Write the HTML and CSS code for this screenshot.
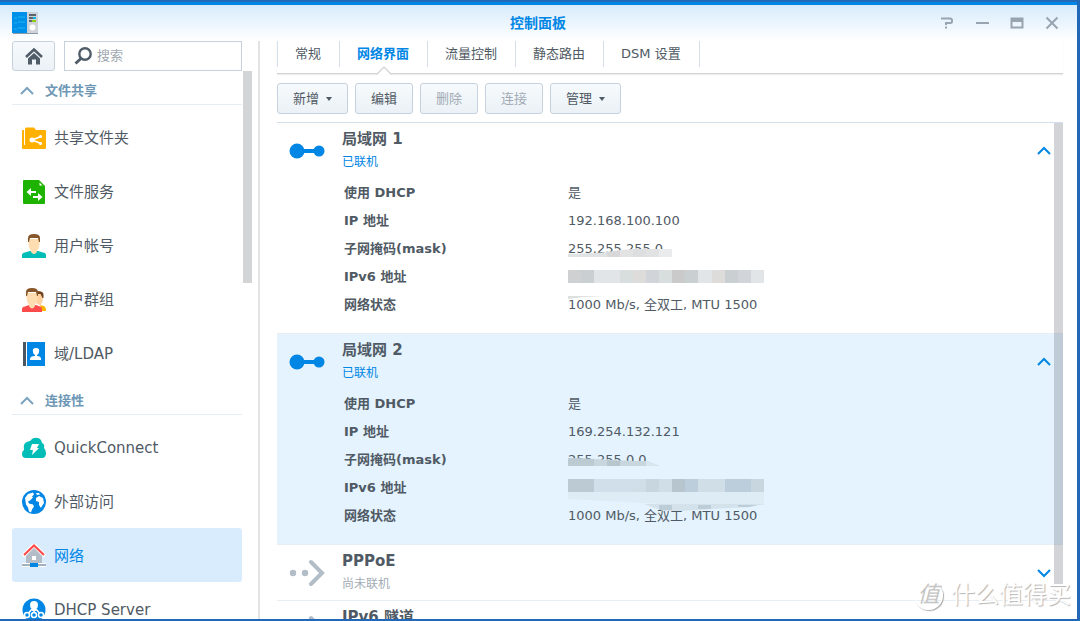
FILE: index.html
```html
<!DOCTYPE html>
<html lang="zh-CN">
<head>
<meta charset="utf-8">
<title>控制面板</title>
<link rel="stylesheet" href="styles.css">
</head>
<body>
<div class="window">
  <header class="titlebar">
    <svg class="app-icon" width="26" height="22" viewBox="0 0 26 22" aria-hidden="true">
      <path d="M14 0h12v21H14z" fill="#cdd3d8"/><path d="M0 0h15v21H0z" fill="#0090ea"/><path d="M1 21h25v1H1z" fill="#8b98a5"/>
      <path d="M2 6h3m1-1h7M2 11h3m1-1h7M2 17h3m1-1h7" stroke="#22b4ee" fill="none"/>
      <path d="M17 3h7M17 6h4M17 9h3" stroke="#37414b" stroke-width="1.600"/><path d="M21 6h3" stroke="#0bb8e8" stroke-width="2"/><path d="M20 9h4" stroke="#8fd014" stroke-width="2"/>
      <circle cx="20.500" cy="15.500" r="3" fill="#fff"/>
    </svg>
    <h1 class="title">控制面板</h1>
    <div class="controls">
      <button class="ctl" aria-label="帮助"><svg width="14" height="14" viewBox="0 0 14 14"><path d="M1 2.500h9q2 0 2 2v1q0 1.500-2 1.500H6v2" fill="none" stroke="#98a4b0" stroke-width="2"/><path d="M5 10.500h2v2H5z" fill="#98a4b0"/></svg></button>
      <button class="ctl" aria-label="最小化"><svg width="14" height="14" viewBox="0 0 14 14"><path d="M1 7h13" stroke="#98a4b0" stroke-width="2"/></svg></button>
      <button class="ctl" aria-label="最大化"><svg width="14" height="14" viewBox="0 0 14 14"><path d="M.5 1.500h13v11H.5zM2.500 6v4.500h9V6z" fill="#98a4b0" fill-rule="evenodd"/></svg></button>
      <button class="ctl" aria-label="关闭"><svg width="14" height="14" viewBox="0 0 14 14"><path d="M1.500 1.500l11 11m0-11l-11 11" stroke="#98a4b0" stroke-width="2"/></svg></button>
    </div>
  </header>
  <div class="body">
    <aside class="sidebar">
      <div class="side-head">
        <button class="btn home" aria-label="主页"><svg width="18" height="18" viewBox="0 0 18 18"><path d="M1 10L9 2.500 17 10" fill="none" stroke="#505d69" stroke-width="2.600"/><path d="M3 11.500l6-5.500 6 5.500v6h-4v-5H7v5H3z" fill="#505d69"/></svg></button>
        <label class="search"><svg width="18" height="18" viewBox="0 0 18 18" aria-hidden="true"><circle cx="11" cy="7" r="5.700" fill="none" stroke="#505d69" stroke-width="2.400"/><path d="M7 11.500L1.500 16.500" stroke="#505d69" stroke-width="3"/></svg><input type="text" placeholder="搜索" aria-label="搜索"></label>
      </div>
      <nav class="side-list">
        <section class="group">
          <button class="group-title"><svg width="14" height="10" viewBox="0 0 14 10"><path d="M1 8l6-6 6 6" fill="none" stroke="#7ba3bf" stroke-width="2"/></svg>文件共享</button>
          <a class="item" href="#"><svg width="24" height="24" viewBox="0 0 24 24"><path d="M0 5q0-1 1-1h1v15h1V3q0-1.500 1.500-1.500H12L14 4h9q1 0 1 1v17q0 1-1 1H1q-1 0-1-1z" fill="#ffb000"/><path d="M19 10.500L10 14l9 3.500" fill="none" stroke="#fff" stroke-width="1.500"/><circle cx="10" cy="14" r="2.500" fill="#fff"/><circle cx="18.500" cy="10.500" r="1.600" fill="#fff"/><circle cx="18.500" cy="17.500" r="1.600" fill="#fff"/></svg>共享文件夹</a>
          <a class="item" href="#"><svg width="24" height="24" viewBox="0 0 24 24"><path d="M2 0h15l6 6v17q0 1-1 1H2q-1 0-1-1V1q0-1 1-1z" fill="#1eb300"/><path d="M17.500 2.500v3h3z" fill="#fff"/><path d="M4.500 12l4.500-4v3h5v2H9v3z M20.500 17L16 13v3h-5v2h5v3z" fill="#fff"/></svg>文件服务</a>
          <a class="item" href="#"><svg width="24" height="24" viewBox="0 0 24 24"><path d="M0 24v-3q0-2 3-2.500L8 17h8l5 1.500q3 .5 3 2.500v3z" fill="#00bdb8"/><path d="M6.500 5h11v5q0 4-2.500 6.500v1.500q-3 4-6 0v-1.500Q6.500 14 6.500 10z" fill="#ffddb0"/><path d="M6 8V4q0-4 6-4t6 4v4h-1l-1-4H8L7 8z" fill="#87572b"/></svg>用户帐号</a>
          <a class="item" href="#"><svg width="24" height="24" viewBox="0 0 24 24"><path d="M18 17l4 1q2 1 2 4v1h-5z" fill="#ffb400"/><path d="M15 5h6v5q0 4-2 6v2l-5-3z" fill="#ffd0a0"/><path d="M15 3q7 0 6.500 4v3h-1l-2-4h-3z" fill="#70451f"/><path d="M0 24v-3q0-2 3-2.500L7 17h7l4 1.500q2 .5 2 2.500v3z" fill="#ff4b4b"/><path d="M4.500 5h11v5q0 4-2.500 6.500v1.500q-3 5-6 0v-1.500Q4.500 14 4.500 10z" fill="#ffddb0"/><path d="M4 8V4q0-4 6-4t6 4v4h-1l-1-4H6L5 8z" fill="#87572b"/></svg>用户群组</a>
          <a class="item" href="#"><svg width="24" height="24" viewBox="0 0 24 24"><path d="M1 0h3v24H1z" fill="#4a5763"/><path d="M5 0h18v24H5z" fill="#0086e5"/><path d="M11 10q-1-4 3-4t3 4q0 2-2 3v1q4 0 4 3v1H8v-1q0-3 5-3v-1q-2-1-2-3z" fill="#fff"/></svg>域/LDAP</a>
        </section>
        <section class="group">
          <button class="group-title"><svg width="14" height="10" viewBox="0 0 14 10"><path d="M1 8l6-6 6 6" fill="none" stroke="#7ba3bf" stroke-width="2"/></svg>连接性</button>
          <a class="item" href="#"><svg width="24" height="24" viewBox="0 0 24 24"><path d="M4 22q-4 0-4-4 0-3 2-4-2-8 6-9 3-4 7-3 4 0 5 5 3 1 2 5 2 2 2 5 0 5-4 5z" fill="#00bdb8"/><path d="M10 8h7l-2 4h2l-7 7 1-5H8z" fill="#fff"/></svg>QuickConnect</a>
          <a class="item" href="#"><svg width="24" height="24" viewBox="0 0 24 24"><circle cx="12" cy="12" r="12" fill="#0086e5"/><path d="M3 8l3-4 5-1.500 1 2-2 2 1 1-3 3-2 1 1 2 4 1 1 2-2 3-1 3-2-1-1-4-2-3z M14 8l3-2 4 2 1 5-2 3-1 2-2-3 0-3-3-1z M14 3l3 0 1 1.500-3 .5z" fill="#fff"/></svg>外部访问</a>
          <a class="item active" href="#" aria-current="page"><svg width="24" height="24" viewBox="0 0 24 24"><path d="M4 10l8-7 8 7v9H4z" fill="#b2bdc7"/><path d="M1 12L12 1l11 11" fill="none" stroke="#fff" stroke-width="4"/><path d="M2 11L12 1.500 22 11" fill="none" stroke="#ff4b4b" stroke-width="2.200"/><path d="M10 12h4v4h-4z" fill="#fff"/><path d="M0 19h24v4H0z" fill="#fff"/><path d="M0 20h24v2H0z" fill="#a4b0bb"/><path d="M8 19h8v4H8z" fill="#0086e5"/></svg>网络</a>
          <a class="item" href="#"><svg width="24" height="24" viewBox="0 0 24 24"><circle cx="12" cy="12" r="11.500" fill="#0086e5"/><path d="M10 11L5 17m9-6l5 6m-7-6v6" stroke="#fff" stroke-width="1.500"/><path d="M8 7q0-4 4-4t4 4q0 3-2 4v2h-4v-2q-2-1-2-4z" fill="#fff"/><g fill="#0086e5" stroke="#fff" stroke-width="1.500"><circle cx="5" cy="17" r="2.500"/><circle cx="12" cy="17" r="2.500"/><circle cx="19" cy="17" r="2.500"/></g></svg>DHCP Server</a>
        </section>
      </nav>
      <div class="side-scroll"></div>
    </aside>
    <main class="main">
      <div class="tabs" role="tablist">
        <button class="tab" role="tab">常规</button>
        <button class="tab current" role="tab" aria-selected="true">网络界面<svg class="notch" width="16" height="9" viewBox="0 0 16 9"><path d="M1 9l7-7 7 7z" fill="#fff"/><path d="M0 8h1l7-7 7 7h1" fill="none" stroke="#d6d8da" stroke-width="1.500"/></svg></button>
        <button class="tab" role="tab">流量控制</button>
        <button class="tab" role="tab">静态路由</button>
        <button class="tab" role="tab">DSM 设置</button>
      </div>
      <div class="toolbar">
        <button class="btn">新增<span class="caret"></span></button>
        <button class="btn">编辑</button>
        <button class="btn" disabled>删除</button>
        <button class="btn" disabled>连接</button>
        <button class="btn">管理<span class="caret"></span></button>
      </div>
      <div class="list">
        <section class="net">
          <div class="net-head">
            <svg class="net-icon" width="36" height="28" viewBox="0 0 36 28"><path d="M8 14h22" stroke="#0086e5" stroke-width="4"/><circle cx="8" cy="14" r="7.500" fill="#0086e5"/><circle cx="30" cy="14" r="5.500" fill="#0086e5"/></svg>
            <div class="net-names"><h2>局域网 1</h2><p class="on">已联机</p></div>
            <button class="toggle" aria-label="收起"><svg width="14" height="10" viewBox="0 0 14 10"><path d="M1 8l6-6 6 6" fill="none" stroke="#0086e5" stroke-width="2"/></svg></button>
          </div>
          <table class="details">
            <tr><th scope="row">使用 DHCP</th><td>是</td></tr>
            <tr><th scope="row">IP 地址</th><td>192.168.100.100</td></tr>
            <tr><th scope="row">子网掩码(mask)</th><td>255.255.255.0<svg class="smudge" width="196" height="28" viewBox="0 0 196 28"><path d="M0 19L26 18 39 17V22H0z" fill="#e0e3e3"/><path d="M39 17l13-2v7H39z" fill="#d8d8da"/><path d="M52 15l13-1v8H52z" fill="#e3e3e3"/><path d="M65 14h13v8H65z" fill="#dddedf"/><path d="M78 14h13v8H78z" fill="#e1e2e3"/><path d="M91 14h13v8H91z" fill="#e9ebed"/></svg></td></tr>
            <tr><th scope="row">IPv6 地址</th><td><svg class="smudge" width="196" height="28" viewBox="0 0 196 28"><path d="M0 7h196v13H0z" fill="#e2e5e7"/><path d="M0 7h13v13H0z" fill="#cfd0d2"/><path d="M13 7h13v13H13zM117 7h13v13h-13zM157 7h13v13h-13z" fill="#cacfd1"/><path d="M104 7h13v13h-13z" fill="#cacaca"/><path d="M52 7h13v13H52zM91 7h13v13H91z" fill="#d8dddd"/><path d="M78 7h13v13H78zM170 7h13v13h-13z" fill="#d1d5d9"/><path d="M65 7h13v13H65zM144 7h13v13h-13z" fill="#dddcda"/></svg></td></tr>
            <tr><th scope="row">网络状态</th><td>1000 Mb/s, 全双工, MTU 1500<svg class="smudge" width="196" height="28" viewBox="0 0 196 28"><path d="M0 5h38l-22 1L0 8z" fill="#dce1df"/></svg></td></tr>
          </table>
        </section>
        <section class="net selected">
          <div class="net-head">
            <svg class="net-icon" width="36" height="28" viewBox="0 0 36 28"><path d="M8 14h22" stroke="#0086e5" stroke-width="4"/><circle cx="8" cy="14" r="7.500" fill="#0086e5"/><circle cx="30" cy="14" r="5.500" fill="#0086e5"/></svg>
            <div class="net-names"><h2>局域网 2</h2><p class="on">已联机</p></div>
            <button class="toggle" aria-label="收起"><svg width="14" height="10" viewBox="0 0 14 10"><path d="M1 8l6-6 6 6" fill="none" stroke="#0086e5" stroke-width="2"/></svg></button>
          </div>
          <table class="details">
            <tr><th scope="row">使用 DHCP</th><td>是</td></tr>
            <tr><th scope="row">IP 地址</th><td>169.254.132.121</td></tr>
            <tr><th scope="row">子网掩码(mask)</th><td>255.255.0.0<svg class="smudge" width="196" height="28" viewBox="0 0 196 28"><path d="M0 12l26 1 39 2h14l13 5H0z" fill="#c8d6dd"/><path d="M0 12l26 1v7H0z" fill="#bccbd2"/><path d="M39 14l13 1v5H39z" fill="#b8c6ce"/><path d="M78 15l14 5H78z" fill="#d8e6ee"/></svg></td></tr>
            <tr><th scope="row">IPv6 地址</th><td><svg class="smudge" width="196" height="28" viewBox="0 0 196 28"><path d="M0 18h196v13H112L0 25z" fill="#deecf5"/><path d="M0 5h196v13H0z" fill="#cfdee7"/><path d="M0 5h26v13H0z" fill="#bccbd3"/><path d="M26 5h39v13H26z" fill="#d0dfe9"/><path d="M78 5h13v13H78zM183 5h13v13h-13z" fill="#c8d7df"/><path d="M104 5h13v13h-13z" fill="#b6c5ce"/><path d="M117 5h13v13h-13zM157 5h26v13h-26z" fill="#bccedb"/></svg></td></tr>
            <tr><th scope="row">网络状态</th><td>1000 Mb/s, 全双工, MTU 1500<svg class="smudge" width="196" height="28" viewBox="0 0 196 28"><path d="M76 2h120l-15 3-38 2-30 2H95z" fill="#d3e2eb"/><path d="M91 3h13v5H91zM130 3h13v4h-13zM170 3h20l-10 2h-10z" fill="#bdcdd7"/></svg></td></tr>
          </table>
        </section>
        <section class="net">
          <div class="net-head">
            <svg class="net-icon" width="36" height="28" viewBox="0 0 36 28"><circle cx="4" cy="14" r="3.200" fill="#b2bdc7"/><circle cx="16" cy="14" r="3.200" fill="#b2bdc7"/><path d="M22 3l11 11-11 11" fill="none" stroke="#b2bdc7" stroke-width="4" stroke-linecap="round"/></svg>
            <div class="net-names"><h2>PPPoE</h2><p>尚未联机</p></div>
            <button class="toggle" aria-label="展开"><svg width="14" height="10" viewBox="0 0 14 10"><path d="M1 2l6 6 6-6" fill="none" stroke="#0086e5" stroke-width="2"/></svg></button>
          </div>
        </section>
        <section class="net">
          <div class="net-head">
            <svg class="net-icon" width="36" height="28" viewBox="0 0 36 28"><circle cx="4" cy="14" r="3.200" fill="#b2bdc7"/><circle cx="16" cy="14" r="3.200" fill="#b2bdc7"/><path d="M22 3l11 11-11 11" fill="none" stroke="#b2bdc7" stroke-width="4" stroke-linecap="round"/></svg>
            <div class="net-names"><h2>IPv6 隧道</h2></div>
          </div>
        </section>
        <div class="list-scroll"></div>
      </div>
    </main>
  </div>
  <div class="watermark"><span class="wm-logo">值</span><span>什么值得买</span></div>
</div>
</body>
</html>
```
FILE: styles.css
```css
* { box-sizing: border-box; }
body {
  margin: 0;
  font: 13px/20px "DejaVu Sans", "Noto Sans CJK SC", sans-serif;
  color: #505a64;
}
h1, h2, p { margin: 0; }
button {
  font: inherit;
  color: inherit;
  background: none;
  border: 0;
  padding: 0;
}
svg { display: block; flex: none; }

.window {
  position: relative;
  display: flex;
  flex-direction: column;
  height: 100vh;
  overflow: hidden;
  background: #fff;
  border: solid #2268b8;
  border-width: 2px 3px 2px 0;
}
.titlebar {
  display: flex;
  align-items: center;
  justify-content: space-between;
  height: 39px;
  flex: none;
  padding: 0 18px 0 12px;
  border-top: 3px solid #0086e5;
  background: linear-gradient(#d7ebfb, #fff);
}
.app-icon, .controls { flex: none; }
.title {
  flex: 1;
  padding-left: 98px;
  font-size: 14px;
  text-align: center;
  color: #0086e5;
}
.controls { display: flex; gap: 21px; }

.body { display: flex; flex: 1; min-height: 0; }
.sidebar {
  position: relative;
  display: flex;
  flex-direction: column;
  flex: none;
  width: 260px;
  padding: 0 16px 0 12px;
  border-right: 2px solid #e2e3e5;
  overflow: hidden;
}
.side-head { display: flex; gap: 9px; flex: none; }
.btn {
  display: flex;
  align-items: center;
  justify-content: center;
  height: 31px;
  padding: 0 15px;
  border: 1px solid #c5d1dc;
  border-radius: 3px;
  background: linear-gradient(#f6fafd, #ebf1f6);
}
.btn:disabled { color: #a2abb5; }
.home { flex: none; width: 43px; height: 30px; padding: 0; }
.search {
  display: flex;
  align-items: center;
  gap: 5px;
  flex: 1;
  min-width: 0;
  height: 30px;
  padding: 0 9px;
  border: 1px solid #c5d1dc;
}
.search input {
  flex: 1;
  min-width: 0;
  padding: 0;
  border: 0;
  outline: 0;
  background: none;
  font: inherit;
  color: #505a64;
}
.search input::placeholder { color: #a0a8b0; opacity: 1; }
.side-scroll {
  position: absolute;
  top: 30px;
  right: 6px;
  width: 9px;
  height: 212px;
  background: #d3d4d6;
}
.group + .group { margin-top: 1px; }
.group-title {
  display: flex;
  align-items: center;
  gap: 11px;
  width: 100%;
  height: 34px;
  margin-bottom: 5px;
  padding: 7px 8px 0;
  border-bottom: 1px solid #e5edf4;
  font-weight: bold;
  color: #6d97b5;
}
.item {
  display: flex;
  align-items: center;
  gap: 8px;
  height: 54px;
  padding: 1px 10px 0;
  border-radius: 3px;
  font-size: 15px;
  color: #505a64;
  text-decoration: none;
}
.item.active { background: #d8ecfe; color: #0086e5; }

.main {
  display: flex;
  flex-direction: column;
  flex: 1;
  min-width: 0;
  padding: 0 14px 0 17px;
}
.tabs {
  display: flex;
  flex: none;
  height: 33px;
  border-bottom: 1px solid #d2d4d6;
  box-shadow: 0 1px 1px #eceded;
}
.tab {
  position: relative;
  height: 26px;
  padding: 0 18px 0 17px;
  border-left: 1px solid #d3dfea;
}
.tab:last-child { border-right: 1px solid #d3dfea; }
.tab.current { font-weight: bold; color: #0086e5; }
.notch { position: absolute; left: 50%; bottom: -8px; margin-left: -8px; }
.toolbar {
  display: flex;
  gap: 7px;
  flex: none;
  padding: 9px 0 8px;
}
.caret {
  margin-left: 7px;
  border: solid transparent;
  border-width: 4px 3px 0;
  border-top-color: #505a64;
}
.list {
  position: relative;
  flex: 1;
  min-height: 0;
  overflow: hidden;
  border-top: 1px solid #d3e0ec;
}
.net { border-bottom: 1px solid #e7eef4; }
.net.selected { background: #e4f3fe; }
.net-head {
  display: flex;
  align-items: center;
  gap: 17px;
  height: 55px;
  padding: 0 12px;
}
.net-names { flex: 1; height: 47px; }
.net-names h2 { font-size: 15px; line-height: 24px; }
.net-names p { font-size: 12px; line-height: 22px; color: #a2abb5; }
.net-names p.on { color: #0086e5; }
.details {
  width: 100%;
  margin: 1px 0 14px;
  padding-left: 67px;
  border-spacing: 0;
}
.details th, .details td { height: 28px; padding: 0; text-align: left; }
.details th { width: 224px; }
.details td { position: relative; }
.smudge { position: absolute; left: 0; top: 0; overflow: visible; }
.list-scroll {
  position: absolute;
  top: 0;
  right: 0;
  width: 9px;
  height: 461px;
  background: rgba(80, 85, 95, 0.25);
}
.watermark {
  position: absolute;
  right: 6px;
  bottom: 8px;
  display: flex;
  align-items: center;
  gap: 8px;
  font-size: 24px;
  line-height: 32px;
  color: #fff;
  text-shadow: 1px 1px 1px #b4b4b4;
  pointer-events: none;
}
.wm-logo {
  width: 29px;
  height: 29px;
  border: 1px solid #fff;
  border-radius: 50%;
  box-shadow: 1px 1px 1px #aaa;
  font-size: 22px;
  font-style: italic;
  line-height: 26px;
  text-align: center;
  color: #c4c4c4;
  text-shadow: none;
}
```
